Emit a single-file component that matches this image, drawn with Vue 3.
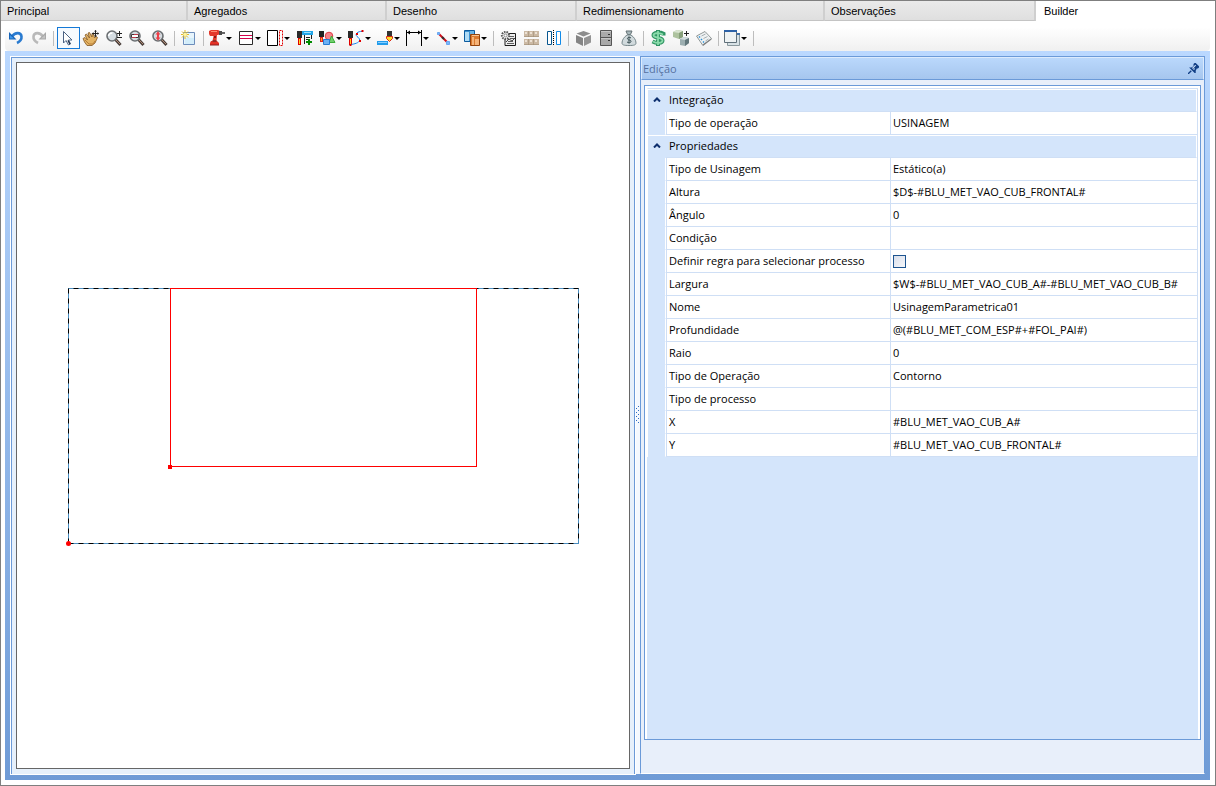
<script setup>
import { ref } from 'vue'

const tabs = [
  { label: 'Principal', weight: 167 },
  { label: 'Agregados', weight: 179 },
  { label: 'Desenho', weight: 170 },
  { label: 'Redimensionamento', weight: 228 },
  { label: 'Observações', weight: 191 },
  { label: 'Builder', weight: 159 },
]
const activeTab = ref('Builder')
const activeTool = ref('Selecionar')

const lens = '<path d="M9.5 9.500L14.500 15" stroke="#4a3f3a" stroke-width="3"/><path d="M10 10L14 14" stroke="#b08b76"/><circle cx="6" cy="6" r="5" fill="#d5dde2" stroke="#6b6f72" stroke-width="1.600"/>'
const bit = '<path d="M0 0h5v7H0z" fill="#2b2b2b"/><path d="M1 7h3v7H1z" fill="#e00000"/><path d="M2 8h1v5H2z" fill="#ffd21f"/>'

const tools = [
  { label: 'Desfazer', icon: '<path d="M4 6.5C7 2 13 2 13.500 6.500C13.800 9.500 12 11.500 9 13" fill="none" stroke="#2a7bd0" stroke-width="2.600"/><path d="M1 2V9.500H8.500z" fill="#1764b8"/><path d="M2 5v3.500h4z" fill="#3d95e8"/>' },
  { label: 'Refazer', icon: '<path d="M12 6.5C9 2 3 2 2.500 6.500C2.200 9.500 4 11.500 7 13" fill="none" stroke="#b9b9b9" stroke-width="2.600"/><path d="M15 2V9.500H7.500z" fill="#a9a9a9"/><path d="M14 5v3.500h-4z" fill="#c4c4c4"/>' },
  { sep: true },
  { label: 'Selecionar', icon: '<path d="M3.500 1.500V13L6 10.500L8.500 15L10.500 14L8.500 10H12z" fill="#fff" stroke="#4b6283"/><path d="M8 10.500l2 3.500" stroke="#22324c" stroke-width="1.500"/>' },
  { label: 'Mover', icon: '<path d="M0 8.500L2 7.500L4.500 10L2 5L3.500 4L6.500 8L5 3L6.500 2.500L9 7L9 3.500L10.500 3.500L11.500 8L13 6.500L14.500 7.500L12 13L9 15.500H4L1.500 12z" fill="#e3b364" stroke="#815522" stroke-width=".8"/><path d="M2 10l4 4h4l2-3" fill="none" stroke="#b67d36"/><path d="M9.500 3.500h6M12.500.5v6" stroke="#222"/><path d="M11 1.500l1.500-1.500L14 1.500zM11 5.500L12.500 7 14 5.500zM10.500 2L9 3.500 10.500 5zM14.500 2L16 3.500 14.500 5z" fill="#222"/>' },
  { label: 'Zoom', icon: lens + '<path d="M2.500 6a4 4 0 0 1 4-3" fill="none" stroke="#fff" stroke-width="1.500"/><path d="M11 3.500h5M13.500 1v5M11 7.500h5" stroke="#222"/>' },
  { label: 'Zoom janela', icon: lens + '<path d="M2.500 4.500h7v3h-7z" fill="#fff" stroke="#3f3438"/><path d="M3 7.500h4M5 4.500h4" stroke="#c33747"/>' },
  { label: 'Zoom ajustar', icon: lens + '<path d="M6 2.500v7" stroke="#ef3f48" stroke-width="2"/><path d="M3.500 4.500L6 1.500 8.500 4.500zM3.500 7.500L6 10.500 8.500 7.500z" fill="#ef3f48"/>' },
  { sep: true },
  { label: 'Novo', icon: '<path d="M2.500 2.500h11v12h-11z" fill="#e8f5fc" stroke="#6d8dbb"/><path d="M4 8h9v6H4z" fill="#d3edfa"/><path d="M0 4.500h8M4 0v9M1 1.500l6 6M7 1.500l-6 6" stroke="#e4bb22"/><circle cx="4" cy="4.500" r="1.800" fill="#fff49c"/>' },
  { sep: true },
  { label: 'Furação', drop: true, icon: '<path d="M0 1l2-1h7l2 1v3l-2 1H8L7.500 11H3.500L4.500 6H1L0 4z" fill="#e4392b"/><path d="M2 1.500h6" stroke="#ff8c70"/><path d="M10 1h3v4h-3z" fill="#4c4c4c"/><path d="M13 3h3" stroke="#333" stroke-width="1.500"/><path d="M5 6h2v2H5z" fill="#8f1b15"/><path d="M2 11h6l2 2v2H1v-2z" fill="#e33227"/><path d="M1 15h9" stroke="#8a2020"/><path d="M3.500 11h4" stroke="#4b2222"/>' },
  { label: 'Rasgo', drop: true, icon: '<path d="M1.500 1.500h13v13h-13z" fill="#fff" stroke="#2a2a2a"/><path d="M2 5.500h12M2 8.500h12" stroke="#d5004c"/>' },
  { label: 'Fita de borda', drop: true, icon: '<path d="M.5.5h10v15H.5z" fill="#fff" stroke="#000"/><path d="M12.500.5h3v15h-3z" fill="#fff" stroke="#e00000" stroke-dasharray="2 1"/>' },
  { label: 'Nova usinagem', icon: '<g transform="translate(0 1)">' + bit + '</g><path d="M5 1h11v4H5z" fill="#23a6e8"/><path d="M7 2h7v1H7z" fill="#9be0ff"/><path d="M7.500 5v9M14.500 5v4M9 7.500h4M9 9.500h2" stroke="#1c1c1c"/><path d="M12 9v6M9 12h6" stroke="#008b00" stroke-width="2"/>' },
  { label: 'Usinagem por forma', drop: true, icon: '<circle cx="10" cy="6" r="3.800" fill="#f5838a" stroke="#df3942"/><path d="M12.500 6L16 12.500h-6z" fill="#72cf6d" stroke="#3aac39"/><path d="M4.500 9.500h6v5h-6z" fill="#6cb1f4" stroke="#287bd2"/><path d="M0 1h5v6H0z" fill="#222"/><path d="M1 7h3v5H1z" fill="#e02020"/><path d="M2 8h1v3H2z" fill="#ffb020"/>' },
  { label: 'Usinagem por caminho', drop: true, icon: '<g transform="translate(0 1)">' + bit + '</g><path d="M14 1.500C10 1 6.500 4 9 6.500C13 9 13.500 13 3 14.500" fill="none" stroke="#1687ef"/><path d="M13.500 0h2v2h-2zM8 3h2v2H8zM11 10h2v2h-2zM1.500 14h2v2h-2z" fill="#e00000"/>' },
  { label: 'Usinagem de topo', drop: true, icon: '<path d="M0 11h11v4H0z" fill="#229ceb"/><path d="M1 12.500h9" stroke="#85ceff"/><path d="M10 1h5v5h-5z" fill="#333"/><path d="M9.500 6.500h6v2l-3 3-3-3z" fill="#ffdd29" stroke="#d92a18"/>' },
  { label: 'Cota', drop: true, icon: '<path d="M.5 0v16M15.500 0v16M1 2.500h14" stroke="#000"/><path d="M1 2.500l3-2v4zM15 2.500l-3-2v4z" fill="#000"/>' },
  { label: 'Linha', drop: true, icon: '<path d="M3 3l10 10" stroke="#d0101c" stroke-width="2"/><path d="M7 7l2 2" stroke="#333" stroke-width="2"/><path d="M2.500 2.500h2v2h-2zM11.500 11.500h3v3h-3z" fill="#79b7fa" stroke="#68a7f2"/>' },
  { label: 'Agrupar', drop: true, icon: '<path d="M.5.5h10v11H.5z" fill="#3c91cf" stroke="#0c5b9e"/><path d="M1 2h4v9H1z" fill="#afdbf5"/><path d="M6 1h4v4H6z" fill="#69b5e5"/><path d="M6.500 4.500h9v11h-9z" fill="#d97a2f" stroke="#94430c"/><path d="M8 7h2v8H8zM11 9h4v6h-4z" fill="#f5b378"/><path d="M8 5.500h7" stroke="#f7c593"/>' },
  { sep: true },
  { label: 'Configurar peça', icon: '<path d="M5 3.500h10.500v12H5z" fill="#eee" stroke="#1c1c1c"/><path d="M7 13.500h7M8 11.500h5M9 6.500h5M10 8.500h4" stroke="#606060"/><path d="M6 12l3-3 3 2 3-3" fill="none" stroke="#444"/><circle cx="5.500" cy="5.500" r="3.600" fill="#f4f4f4" stroke="#555" stroke-width="2" stroke-dasharray="1.500 1"/><circle cx="5.500" cy="5.500" r="1.500" fill="#fff" stroke="#888"/>' },
  { label: 'Materiais', icon: '<g fill="#cbb9a4"><path d="M1 1h5v6H1zM6 1h5v6H6zM11 1h5v6h-5zM1 9h5v6H1zM6 9h5v6H6zM11 9h5v6h-5z"/></g><g fill="#ece1d4"><path d="M2 2h2v2H2zM7 2h2v2H7zM12 2h2v2h-2zM2 10h2v2H2zM7 10h2v2H7zM12 10h2v2h-2z"/></g><path d="M1 6.500h15M1 14.500h15M5.500 1v6M10.500 1v6M5.500 9v6M10.500 9v6" stroke="#a08d76" stroke-opacity=".6"/>' },
  { label: 'Espelhar', icon: '<path d="M1.500 1.500h4v13h-4z" fill="#fff" stroke="#07568f"/><path d="M10.500 1.500h4v13h-4z" fill="#fff" stroke="#128be8"/><path d="M7.500 0v16" stroke="#000" stroke-dasharray="1 1"/>' },
  { sep: true },
  { label: 'Visualizar 3D', icon: '<path d="M8.500 1l7 2.500-7 3-7-3z" fill="#8d8d8d"/><path d="M1 5l7 3v8l-7-3.500z" fill="#858585"/><path d="M16 5L9 8v8l7-3.500z" fill="#949494"/>' },
  { label: 'Módulo', icon: '<path d="M2.500.5h11v15h-11z" fill="#a9a9a9" stroke="#555"/><path d="M3 7.500h10" stroke="#555"/><path d="M3 1.500h10M3 8.500h10" stroke="#c5c5c5"/><path d="M10 4.500h2M10 10.500h2" stroke="#333"/>' },
  { label: 'Custo', icon: '<path d="M5 1h6L9.500 4.500h-3z" fill="#a9b9bc" stroke="#647174"/><path d="M6 5h4c3 2 5 5 5 8 0 2-2 2.500-7 2.500S1 15 1 13c0-3 2-6 5-8z" fill="#d1dadd" stroke="#77878b"/><path d="M10 8c-2-1.500-4-.5-3.500 1s3.500.5 3.500 2.300-2.500 1.700-4 .7M8 6.500v7" fill="none" stroke="#3c5055"/>' },
  { sep: true },
  { label: 'Preço', icon: '<path d="M13.500 5.500V3.800C10 2 3.500 2 3.500 5.300c0 3.200 9 1.700 9 5.200 0 3-6 3-10 1M8 0v16" fill="none" stroke="#2f9463" stroke-width="4"/><path d="M13 4.500C10 2.500 3.500 2.500 3.500 5.300c0 3 9 1.700 9 5.200 0 3-6 3-9.500 1M8 1v14" fill="none" stroke="#8adbaa" stroke-width="1.800"/>' },
  { label: 'Substituir módulos', icon: '<path d="M0 2l4-2 6 1v6L6 9 0 7z" fill="#aec39f"/><path d="M0 2l6 1 4-2-6-1z" fill="#d8e4d0"/><path d="M6 3v6l4-2V1z" fill="#879f7a"/><path d="M7 9l4-2 5 1v5l-4 3-5-1z" fill="#9caeb0"/><path d="M7 9l5 1 4-2-5-1z" fill="#d1dbdc"/><path d="M12 10v6l4-3V8z" fill="#62777b"/><path d="M11 3.500h5M13.500 1v5" stroke="#222"/>' },
  { label: 'Lista', icon: '<path d="M.5 6L9 1.500l6.500 7L6.500 15z" fill="#eef1f2" stroke="#929999"/><path d="M6.500 15l9-6.500v1L7 16z" fill="#777"/><path d="M3 6.500l1 1M5 9l1 1M7 11.500l1 1" stroke="#2d91d6" stroke-width="1.500"/><path d="M5.500 6l4-2M7.500 8.500l4-2M9.500 11l3-2" stroke="#a6afb2"/>' },
  { sep: true },
  { label: 'Janelas', drop: true, icon: '<path d="M3.500 3.500h12v12h-12z" fill="#d8e2e6" stroke="#8b999e"/><path d="M.5.5h12v12H.5z" fill="#eef2f3" stroke="#5f6f79"/><path d="M0 0h13v2H0z" fill="#2d62a7"/><path d="M13 4h3" stroke="#3c6eaa" stroke-width="2"/>' },
  { sep: true },
]

const groups = ref([
  {
    name: 'Integração',
    open: true,
    rows: [{ name: 'Tipo de operação', value: 'USINAGEM' }],
  },
  {
    name: 'Propriedades',
    open: true,
    rows: [
      { name: 'Tipo de Usinagem', value: 'Estático(a)' },
      { name: 'Altura', value: '$D$-#BLU_MET_VAO_CUB_FRONTAL#' },
      { name: 'Ângulo', value: '0' },
      { name: 'Condição', value: '' },
      { name: 'Definir regra para selecionar processo', check: true, value: false },
      { name: 'Largura', value: '$W$-#BLU_MET_VAO_CUB_A#-#BLU_MET_VAO_CUB_B#' },
      { name: 'Nome', value: 'UsinagemParametrica01' },
      { name: 'Profundidade', value: '@(#BLU_MET_COM_ESP#+#FOL_PAI#)' },
      { name: 'Raio', value: '0' },
      { name: 'Tipo de Operação', value: 'Contorno' },
      { name: 'Tipo de processo', value: '' },
      { name: 'X', value: '#BLU_MET_VAO_CUB_A#' },
      { name: 'Y', value: '#BLU_MET_VAO_CUB_FRONTAL#' },
    ],
  },
])
</script>

<template>
  <div class="window">
    <nav class="tabs" role="tablist">
      <button
        v-for="t in tabs"
        :key="t.label"
        type="button"
        role="tab"
        class="tab"
        :class="{ active: activeTab === t.label }"
        :aria-selected="activeTab === t.label"
        :style="{ flexGrow: t.weight }"
        @click="activeTab = t.label"
      >{{ t.label }}</button>
    </nav>

    <div class="toolbar" role="toolbar">
      <template v-for="(t, i) in tools" :key="i">
        <span v-if="t.sep" class="sep"></span>
        <button
          v-else
          type="button"
          class="tool"
          :class="{ drop: t.drop, selected: activeTool === t.label }"
          :aria-label="t.label"
          @click="activeTool = t.label"
        >
          <svg class="icon" viewBox="0 0 16 16" v-html="t.icon"></svg>
          <span v-if="t.drop" class="arrow"></span>
        </button>
      </template>
    </div>

    <main class="frame">
      <section class="drawing">
        <div class="canvas">
          <svg class="plan" viewBox="0 0 511 256">
            <rect x="0.5" y="0.5" width="510" height="255" class="piece" />
            <path d="M0.500 255.500V0.500H510.500V255.500M0.500 255.500H510.500" class="piece-dash" />
            <rect x="102.500" y="0.500" width="306" height="178" class="cut" />
            <rect x="100" y="177" width="4" height="4" class="mark" />
            <circle cx="0.500" cy="255.500" r="2.500" class="mark" />
          </svg>
        </div>
      </section>

      <div class="splitter">
        <svg class="grip" viewBox="0 0 3 18">
          <path
            d="M2 0h1v1h-1zM0 2h1v1h-1zM2 4h1v1h-1zM0 6h1v1h-1zM2 8h1v1h-1zM0 10h1v1h-1zM2 12h1v1h-1zM0 14h1v1h-1zM2 16h1v1h-1z"
            fill="#2f6cc0"
          />
        </svg>
      </div>

      <aside class="editor">
        <header class="caption">
          <h2>Edição</h2>
          <button type="button" class="pin" aria-label="Fixar painel">
            <svg viewBox="0 0 10 10">
              <path d="M0 10L3 7" stroke="#123f85" stroke-width="1.200" />
              <path d="M1 4h2l2-1V1l1-1h1l3 3v1l-1 1H8L7 7v2H6z" fill="#123f85" />
              <path d="M4 5l3-3M5 6l1-1" stroke="#c8dcf5" />
            </svg>
          </button>
        </header>
        <div class="grid-box">
          <div class="grid">
            <table>
              <colgroup>
                <col class="c-gutter" />
                <col class="c-name" />
                <col />
              </colgroup>
              <tbody v-for="g in groups" :key="g.name">
                <tr class="category">
                  <td class="toggle-cell">
                    <button
                      type="button"
                      class="toggle"
                      :aria-label="g.name"
                      :aria-expanded="g.open"
                      @click="g.open = !g.open"
                    >
                      <svg viewBox="0 0 8 5"><path d="M1 4.500L4 1.500L7 4.500" fill="none" stroke="#0d2f6e" stroke-width="2" /></svg>
                    </button>
                  </td>
                  <th colspan="2" scope="rowgroup">{{ g.name }}</th>
                </tr>
                <template v-if="g.open">
                  <tr v-for="r in g.rows" :key="r.name" class="row">
                    <td class="gutter"></td>
                    <th scope="row" class="name">
                      <label v-if="r.check" for="rule-check">{{ r.name }}</label>
                      <template v-else>{{ r.name }}</template>
                    </th>
                    <td class="value">
                      <input v-if="r.check" id="rule-check" v-model="r.value" type="checkbox" />
                      <template v-else>{{ r.value }}</template>
                    </td>
                  </tr>
                </template>
              </tbody>
            </table>
          </div>
        </div>
      </aside>
    </main>
  </div>
</template>

<style>
body {
  margin: 0;
  background: #fff;
}
</style>

<style scoped>
* {
  box-sizing: border-box;
}
button {
  margin: 0;
  padding: 0;
  border: 0;
  background: none;
  color: inherit;
  font: inherit;
}
.window {
  display: flex;
  flex-direction: column;
  height: 100vh;
  padding-bottom: 5px;
  border: 1px solid #7f7f7f;
  background: #fff;
  color: #000;
  font-family: "Liberation Sans", Arial, sans-serif;
  font-size: 11px;
}
.tabs {
  display: flex;
  flex: none;
  height: 20px;
}
.tab {
  flex: 1 1 20px;
  min-width: 0;
  padding: 0 6px;
  border-right: 2px solid #cfcfcf;
  border-bottom: 1px solid #c4c4c4;
  background: linear-gradient(#eaeaea, #dfdfdf);
  text-align: left;
  line-height: 20px;
}
.tab.active {
  padding-left: 8px;
  border-color: #fff;
  background: #fff;
}
.toolbar {
  display: flex;
  flex: none;
  align-items: center;
  height: 30px;
  padding-top: 4px;
  margin: 0 5px 0 4px;
  background: linear-gradient(#fff 20%, #f0f0f0);
  border-radius: 4px;
}
.sep {
  flex: none;
  width: 1px;
  height: 15px;
  margin: 0 3px 0 2px;
  background: #bdbdbd;
}
.tool {
  display: flex;
  flex: none;
  align-items: center;
  width: 23px;
  height: 22px;
  padding-left: 3px;
}
.tool.drop {
  gap: 1px;
  width: 29px;
  padding-left: 2px;
}
.tool.selected {
  padding-left: 2px;
  border: 1px solid #1479d7;
  background: #f6fafe;
}
.icon {
  display: block;
  flex: none;
  width: 16px;
  height: 16px;
  overflow: visible;
}
.arrow {
  width: 0;
  border: 3px solid transparent;
  border-top-color: #000;
  border-bottom-width: 0;
}
.frame {
  display: flex;
  flex: 1;
  min-height: 0;
  margin: 0 5px 0 4px;
  padding: 5px 5px 6px;
  background: linear-gradient(#bad8ff, #6f9bd6);
}
.drawing {
  display: flex;
  flex: 614 1 10px;
  min-width: 0;
  margin: 1px 1px 0;
  padding: 4px 4px 5px;
  border: 1px solid #6b9ad8;
  border-bottom: 0;
  outline: 1px solid #fff;
  background: #e6f0fb;
}
.canvas {
  display: flex;
  flex: 1;
  align-items: center;
  justify-content: center;
  border: 1px solid #666;
  background: #fff;
}
.plan {
  display: block;
  width: 511px;
  height: 256px;
  overflow: visible;
}
.piece,
.piece-dash,
.cut {
  fill: none;
  stroke-width: 1;
}
.piece {
  stroke: #4a8dc0;
}
.piece-dash {
  stroke: #000;
  stroke-dasharray: 5 5;
}
.cut {
  stroke: #f00;
}
.mark {
  fill: #f00;
}
.splitter {
  display: flex;
  flex: none;
  align-items: center;
  justify-content: flex-start;
  width: 4px;
  background: #f4f9ff;
}
.grip {
  width: 3px;
  height: 18px;
}
.editor {
  display: flex;
  flex: 555 1 10px;
  flex-direction: column;
  min-width: 0;
  border: 1px solid #6b9ad8;
  border-bottom-color: #fff;
  background: #e8effa;
  font-family: "Open Sans", "Noto Sans", sans-serif;
}
.caption {
  display: flex;
  flex: none;
  align-items: center;
  justify-content: space-between;
  height: 23px;
  padding: 0 4px 0 1px;
  border: 1px solid #dcebfd;
  border-bottom: 1px solid #6b9ad8;
  background: linear-gradient(#bad8fc, #a6c6ee);
  color: #56719f;
}
.caption h2 {
  margin: 0;
  font-size: 11px;
  font-weight: 400;
  line-height: 20px;
}
.pin,
.pin svg {
  display: block;
  width: 11px;
  height: 11px;
}
.grid-box {
  display: flex;
  flex: 1;
  margin: 5px 3px 33px;
  padding: 2px 2px 0;
  border: 1px solid #6b9ad8;
  background: #fff;
}
.grid {
  flex: 1;
  min-width: 0;
  background: #d4e5fb;
}
table {
  width: 100%;
  border-spacing: 0;
  border-top: 1px solid #cfdff5;
  border-right: 1px solid #cfdff5;
  border-left: 1px solid #fff;
  table-layout: fixed;
}
.c-gutter {
  width: 18px;
}
.c-name {
  width: 224px;
}
th,
td {
  height: 23px;
  padding: 0;
  border-bottom: 1px solid #cfdff5;
  font-weight: 400;
  line-height: 20px;
  text-align: left;
  white-space: nowrap;
  overflow: hidden;
}
.category td,
.category th {
  padding-bottom: 2px;
  border-top: 1px solid #fff;
  background: #d4e5fb;
  line-height: 18px;
}
.category th {
  padding-left: 3px;
  border-right: 1px solid #fff;
}
.category .toggle-cell {
  border-bottom-color: #d4e5fb;
}
.toggle {
  display: block;
  width: 18px;
  height: 18px;
  padding-left: 5px;
}
.toggle svg {
  display: block;
  width: 8px;
  height: 5px;
}
.row .gutter {
  border-right: 1px solid #fff;
  border-bottom-color: #d4e5fb;
  background: #d4e5fb;
}
.row .name,
.row .value {
  padding-left: 2px;
  border-left: 1px solid #cfdff5;
  background: #fff;
}
input[type='checkbox'] {
  display: block;
  width: 13px;
  height: 13px;
  margin: 0;
  border: 1px solid #1d5490;
  background: linear-gradient(135deg, #d9dfeb, #f6f7fa);
  appearance: none;
}
input[type='checkbox']:checked {
  background: #1d5490;
}
</style>
